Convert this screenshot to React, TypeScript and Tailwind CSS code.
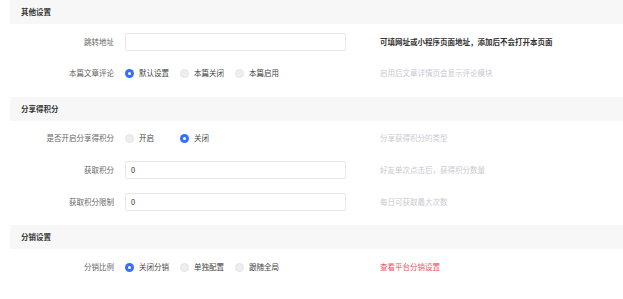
import type { ReactNode } from "react";

const font = { fontFamily: '"Noto Sans CJK SC", "Noto Sans", sans-serif' };

function SectionHeader({ title }: { title: string }) {
  return (
    <div className="flex h-6 items-center bg-[#f7f7f7] pl-[11px] text-[7.5px] font-bold text-[#333]">
      {title}
    </div>
  );
}

interface RowProps {
  label: string;
  children: ReactNode;
  help?: ReactNode;
}

function Row({ label, children, help }: RowProps) {
  return (
    <div className="flex h-[18px] items-center">
      <div className="w-[105px] pr-[1px] text-right text-[7.5px] text-[#666]">{label}</div>
      <div className="ml-[10px] w-[221px]">{children}</div>
      <div className="ml-[34px] text-[7.5px]">{help}</div>
    </div>
  );
}

function TextInput({ value = "" }: { value?: string }) {
  return (
    <div className="flex h-[18px] w-full items-center rounded-[2px] border border-[#e8e8e8] bg-white px-[5px] text-[7.5px] text-[#333]">
      {value}
    </div>
  );
}

function RadioGroup({ options, checked }: { options: string[]; checked: number }) {
  return (
    <div className="flex items-center">
      {options.map((opt, i) => (
        <div key={opt} className="flex w-[55px] items-center gap-[5px]">
          {i === checked ? (
            <span className="flex h-[9px] w-[9px] items-center justify-center rounded-full bg-[#3370ff]">
              <span className="h-[3px] w-[3px] rounded-full bg-white" />
            </span>
          ) : (
            <span className="h-[9px] w-[9px] rounded-full border border-[#e4e4e4] bg-[#eeeeee]" />
          )}
          <span className="text-[7.5px] text-[#444]">{opt}</span>
        </div>
      ))}
    </div>
  );
}

export default function App() {
  return (
    <div className="h-[299px] w-[623px] overflow-hidden bg-white pl-[10px]" style={font}>
      <SectionHeader title="其他设置" />
      <div className="flex flex-col gap-[13px] pt-[9px] pb-[15px]">
        <Row
          label="跳转地址"
          help={<span className="font-bold text-[#333]">可填网址或小程序页面地址，添加后不会打开本页面</span>}
        >
          <TextInput />
        </Row>
        <Row label="本篇文章评论" help={<span className="text-[#c8cad0]">启用后文章详情页会显示评论模块</span>}>
          <RadioGroup options={["默认设置", "本篇关闭", "本篇启用"]} checked={0} />
        </Row>
      </div>

      <SectionHeader title="分享得积分" />
      <div className="flex flex-col gap-[14px] pt-[8px] pb-[14px]">
        <Row label="是否开启分享得积分" help={<span className="text-[#c8cad0]">分享获得积分的类型</span>}>
          <RadioGroup options={["开启", "关闭"]} checked={1} />
        </Row>
        <Row label="获取积分" help={<span className="text-[#c8cad0]">好友单次点击后，获得积分数量</span>}>
          <TextInput value="0" />
        </Row>
        <Row label="获取积分限制" help={<span className="text-[#c8cad0]">每日可获取最大次数</span>}>
          <TextInput value="0" />
        </Row>
      </div>

      <SectionHeader title="分销设置" />
      <div className="flex flex-col pt-[9px]">
        <Row label="分销比例" help={<span className="text-[#f0505f]">查看平台分销设置</span>}>
          <RadioGroup options={["关闭分销", "单独配置", "跟随全局"]} checked={0} />
        </Row>
      </div>
    </div>
  );
}
